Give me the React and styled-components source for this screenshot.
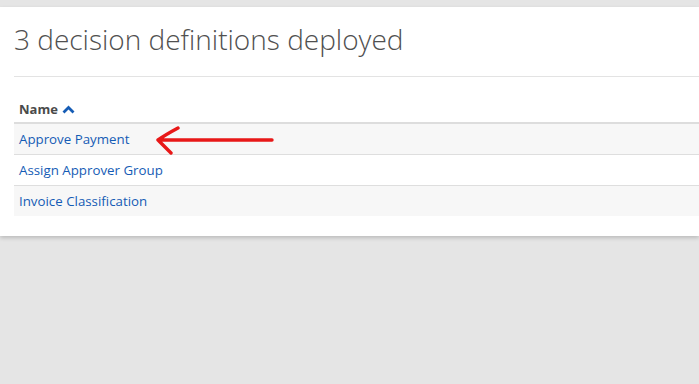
import React from "react";
import styled, { createGlobalStyle } from "styled-components";

const Global = createGlobalStyle`
  html, body { margin: 0; padding: 0; background: #e5e5e5; }
  body { font-family: "Open Sans", "Liberation Sans", sans-serif; overflow: hidden; }
`;

const Page = styled.div`
  width: 699px;
  height: 384px;
  padding-top: 7px;
  box-sizing: border-box;
  background: #e5e5e5;
`;

const Panel = styled.section`
  position: relative;
  background: #fff;
  padding: 0 0 20px 14px;
  box-shadow: 0 2px 4px rgba(0, 0, 0, 0.18);
`;

const Title = styled.h1`
  margin: 0;
  padding: 13px 0 0;
  height: 56px;
  font-weight: 350;
  font-size: 28px;
  line-height: 38px;
  color: #505050;
  border-bottom: 1px solid #e3e3e3;
`;

const Table = styled.div`
  margin-top: 19px;
`;

const HeadRow = styled.div`
  display: flex;
  align-items: center;
  gap: 4px;
  padding: 0 5px;
  height: 26px;
  border-bottom: 2px solid #ddd;
  font-weight: 700;
  font-size: 13px;
  color: #4a4a4a;
`;

const Row = styled.div`
  display: flex;
  align-items: center;
  height: 30px;
  padding: 0 5px;
  background: ${(p) => (p.$odd ? "#f7f7f7" : "#fff")};
  border-top: ${(p) => (p.$first ? "none" : "1px solid #dedede")};
`;

const Link = styled.a`
  color: #155cb5;
  font-size: 13.3px;
  text-decoration: none;
`;

const Arrow = styled.svg`
  position: absolute;
  left: 150px;
  top: 112px;
`;

const Caret = () => (
  <svg width="13" height="9" viewBox="0 0 13 9">
    <path d="M1.5 7.5 L6.5 2.5 L11.5 7.5" fill="none" stroke="#155cb5" strokeWidth="2.8" />
  </svg>
);

const items = ["Approve Payment", "Assign Approver Group", "Invoice Classification"];

export default function App() {
  return (
    <Page>
      <Global />
      <Panel>
        <Title>3 decision definitions deployed</Title>
        <Table>
          <HeadRow>
            Name <Caret />
          </HeadRow>
          {items.map((t, i) => (
            <Row key={t} $odd={i % 2 === 0} $first={i === 0}>
              <Link href="#">{t}</Link>
            </Row>
          ))}
        </Table>
        <Arrow width="130" height="40" viewBox="0 0 130 40">
          <path
            d="M8 21 L122 21 M28 9 Q15 16 8 21 Q14 27 21 34"
            fill="none"
            stroke="#e81818"
            strokeWidth="3.4"
            strokeLinecap="round"
            strokeLinejoin="round"
          />
        </Arrow>
      </Panel>
    </Page>
  );
}
